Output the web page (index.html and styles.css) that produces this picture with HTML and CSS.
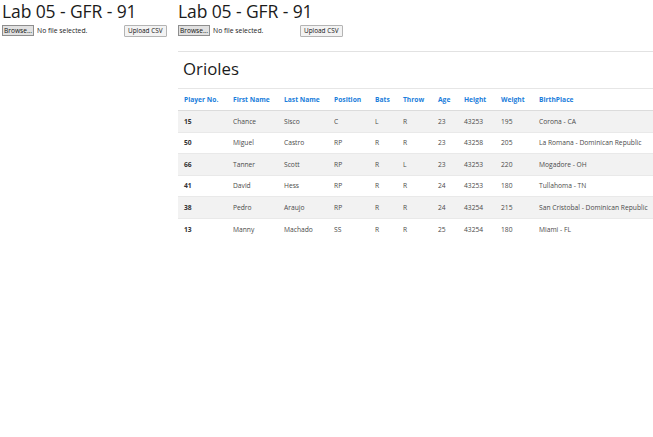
FILE: index.html
```html
<!DOCTYPE html>
<html>
<head>
<meta charset="utf-8">
<link rel="stylesheet" href="styles.css">
</head>
<body>
<div class="page">
  <div class="side">
    <h1 class="title">Lab 05 - GFR - 91</h1>
    <div class="uploader">
      <span class="file"><button class="browse">Browse...</button><span class="nofile">No file selected.</span></span>
      <button class="upload">Upload CSV</button>
    </div>
  </div>
  <div class="main">
    <h1 class="title">Lab 05 - GFR - 91</h1>
    <div class="uploader">
      <span class="file"><button class="browse">Browse...</button><span class="nofile">No file selected.</span></span>
      <button class="upload">Upload CSV</button>
    </div>
    <hr class="rule">
    <h2 class="team">Orioles</h2>
    <table class="roster">
      <colgroup>
        <col class="c1"><col class="c2"><col class="c3"><col class="c4"><col class="c5"><col class="c6"><col class="c7"><col class="c8"><col class="c9"><col class="c10">
      </colgroup>
      <thead>
        <tr><th>Player No.</th><th>First Name</th><th>Last Name</th><th>Position</th><th>Bats</th><th>Throw</th><th>Age</th><th>Height</th><th>Weight</th><th>BirthPlace</th></tr>
      </thead>
      <tbody>
        <tr><td class="num">15</td><td>Chance</td><td>Sisco</td><td>C</td><td>L</td><td>R</td><td>23</td><td>43253</td><td>195</td><td>Corona - CA</td></tr>
        <tr><td class="num">50</td><td>Miguel</td><td>Castro</td><td>RP</td><td>R</td><td>R</td><td>23</td><td>43258</td><td>205</td><td>La Romana - Dominican Republic</td></tr>
        <tr><td class="num">66</td><td>Tanner</td><td>Scott</td><td>RP</td><td>R</td><td>L</td><td>23</td><td>43253</td><td>220</td><td>Mogadore - OH</td></tr>
        <tr><td class="num">41</td><td>David</td><td>Hess</td><td>RP</td><td>R</td><td>R</td><td>24</td><td>43253</td><td>180</td><td>Tullahoma - TN</td></tr>
        <tr><td class="num">38</td><td>Pedro</td><td>Araujo</td><td>RP</td><td>R</td><td>R</td><td>24</td><td>43254</td><td>215</td><td>San Cristobal - Dominican Republic</td></tr>
        <tr><td class="num">13</td><td>Manny</td><td>Machado</td><td>SS</td><td>R</td><td>R</td><td>25</td><td>43254</td><td>180</td><td>Miami - FL</td></tr>
      </tbody>
    </table>
  </div>
</div>
</body>
</html>
```
FILE: styles.css
```css
* { box-sizing: border-box; }
html, body { margin: 0; padding: 0; background: #fff; }
body { font-family: "Open Sans", "Noto Sans", sans-serif; color: #292b2c; }
.page { display: flex; align-items: flex-start; }
.side { width: 178px; padding-left: 2px; flex: none; }
.main { flex: 1; min-width: 0; }
.title {
  margin: 0;
  font-weight: 400;
  font-size: 17.5px;
  line-height: 22px;
  letter-spacing: -0.1px;
  color: #1b1b1b;
  white-space: nowrap;
}
.uploader { display: flex; align-items: center; margin-top: 2px; height: 13px; }
.file { display: flex; align-items: center; width: 122px; }
.browse {
  font-family: inherit;
  font-size: 6.6px;
  height: 11px;
  padding: 0 1px;
  margin: 0;
  border: 1px solid #8e8e8e;
  background: #e1e1e1;
  color: #111;
  border-radius: 0;
  line-height: 9px;
}
.nofile { font-size: 6.8px; color: #222; margin-left: 3px; }
.upload {
  font-family: inherit;
  font-size: 6.4px;
  height: 12px;
  padding: 0 3px;
  margin: 0;
  border: 1px solid #b4b4b4;
  background: #f3f3f3;
  color: #111;
  border-radius: 1px;
  line-height: 10px;
}
.rule { border: 0; border-top: 1px solid #e2e2e2; margin: 14px 0 0 0; height: 0; }
.team {
  margin: 0;
  padding: 5px 0 0 5px;
  font-size: 16.8px;
  font-weight: 400;
  line-height: 24px;
  color: #1b1b1b;
  height: 36px;
}
.roster { width: 100%; border-collapse: collapse; table-layout: fixed; font-size: 6.7px; }
.c1 { width: 49px; } .c2 { width: 51px; } .c3 { width: 50px; } .c4 { width: 41px; } .c5 { width: 28px; }
.c6 { width: 35px; } .c7 { width: 26px; } .c8 { width: 37px; } .c9 { width: 38px; }
.roster th, .roster td { text-align: left; padding: 0 0 0 6px; white-space: nowrap; overflow: hidden; }
.roster thead th {
  color: #1a7ddb;
  font-weight: 700;
  height: 22px;
  border-top: 1px solid #e6e6e6;
  border-bottom: 1px solid #dcdcdc;
}
.roster tbody td { height: 21.5px; color: #4a4a4a; border-top: 1px solid #e9e9e9; }
.roster tbody tr:nth-child(odd) { background: #f2f2f2; }
.roster td.num { font-weight: 700; color: #333; }
```
